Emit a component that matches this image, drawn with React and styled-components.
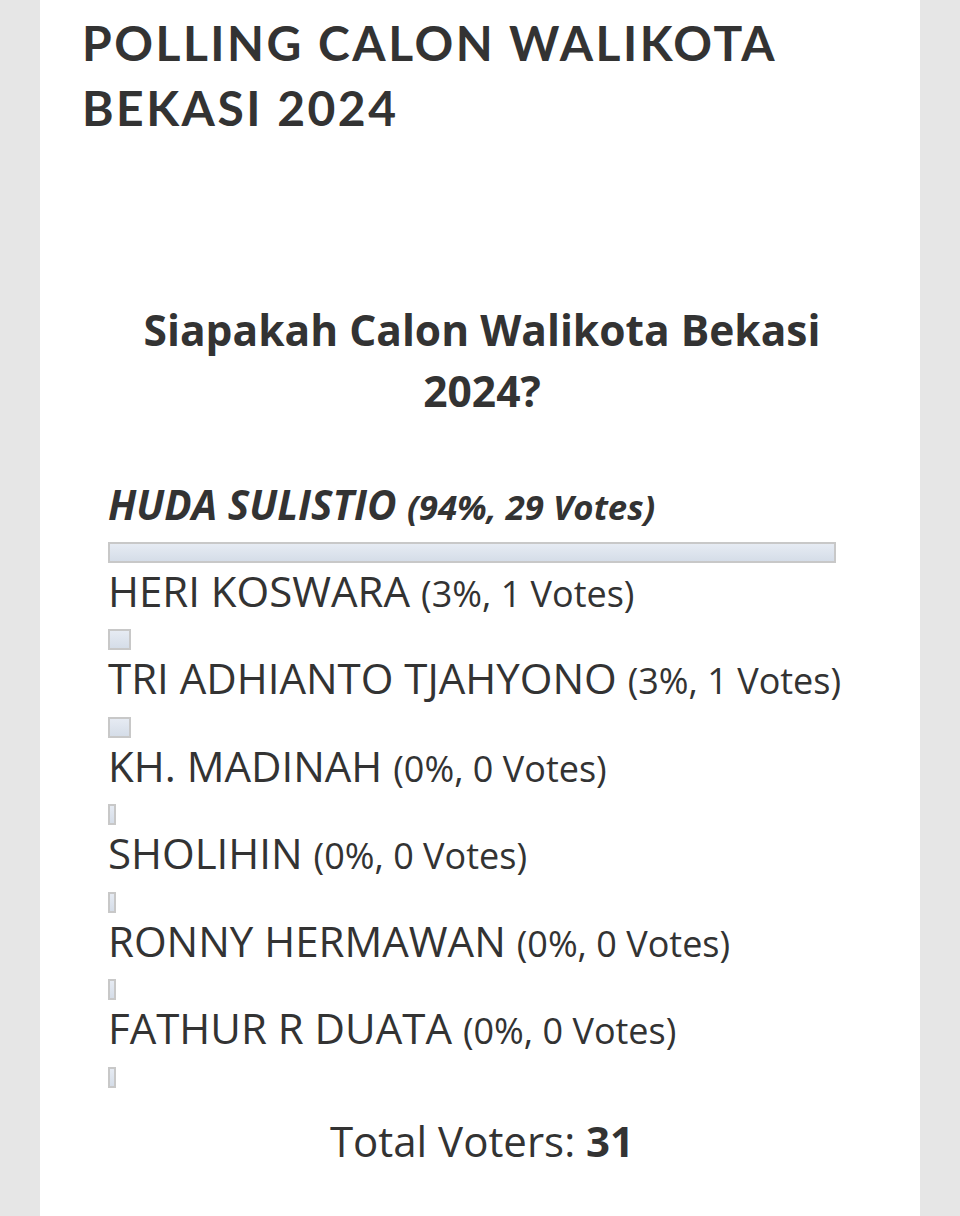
import { createGlobalStyle, styled } from "styled-components";

const GlobalStyle = createGlobalStyle`
  body {
    margin: 0;
    background: #e6e6e6;
    font-family: "Open Sans", "Liberation Sans", sans-serif;
    color: #333;
  }
`;

const Page = styled.div`
  padding: 0 40px;
`;

const Card = styled.div`
  background: #fff;
  min-height: 1216px;
  box-sizing: border-box;
  padding: 10px 38px 40px 42px;
`;

const Title = styled.h1`
  margin: 0;
  font-family: "Lato", "Open Sans", sans-serif;
  font-weight: 700;
  font-size: 48px;
  line-height: 65px;
  letter-spacing: 2.5px;
  color: #333;
`;

const Poll = styled.section`
  margin-top: 159px;
`;

const Question = styled.h3`
  margin: 0;
  padding: 0 50px;
  text-align: center;
  font-weight: 700;
  font-size: 42.5px;
  line-height: 61px;
`;

const Answers = styled.ul`
  list-style: none;
  margin: 56px 0 0;
  padding: 0 0 0 26px;
`;

const Answer = styled.li`
  font-size: ${({ $top }) => ($top ? "40.5px" : "42px")};
  line-height: 56.5px;
  font-style: ${({ $top }) => ($top ? "italic" : "normal")};
  font-weight: ${({ $top }) => ($top ? 700 : 400)};
  font-stretch: ${({ $top }) => ($top ? "88%" : "100%")};
`;

const Count = styled.small`
  font-size: 0.857em;
  line-height: 1;
`;

const Bar = styled.div`
  box-sizing: border-box;
  height: 21px;
  margin: ${({ $top }) => ($top ? "8px" : "10px")} 0 0;
  border: 2px solid #c8c8c8;
  background: linear-gradient(#e6ebf3, #d5dde8);
`;

const Total = styled.p`
  margin: 25px 0 0;
  text-align: center;
  font-size: 42px;
  line-height: 56px;

  b {
    font-weight: 700;
  }
`;

const answers = [
  { name: "HUDA SULISTIO", pct: 94, votes: 29 },
  { name: "HERI KOSWARA", pct: 3, votes: 1 },
  { name: "TRI ADHIANTO TJAHYONO", pct: 3, votes: 1 },
  { name: "KH. MADINAH", pct: 0, votes: 0 },
  { name: "SHOLIHIN", pct: 0, votes: 0 },
  { name: "RONNY HERMAWAN", pct: 0, votes: 0 },
  { name: "FATHUR R DUATA", pct: 0, votes: 0 },
];

export default function App() {
  const total = answers.reduce((sum, a) => sum + a.votes, 0);

  return (
    <>
      <GlobalStyle />
      <Page>
        <Card>
          <Title>POLLING CALON WALIKOTA BEKASI 2024</Title>
          <Poll>
            <Question>Siapakah Calon Walikota Bekasi 2024?</Question>
            <Answers>
              {answers.map((a, i) => (
                <Answer key={a.name} $top={i === 0}>
                  {a.name}{" "}
                  <Count>
                    ({a.pct}%, {a.votes} Votes)
                  </Count>
                  <Bar $top={i === 0} style={{ width: `${Math.max(a.pct, 1)}%` }} />
                </Answer>
              ))}
            </Answers>
            <Total>
              Total Voters: <b>{total}</b>
            </Total>
          </Poll>
        </Card>
      </Page>
    </>
  );
}
